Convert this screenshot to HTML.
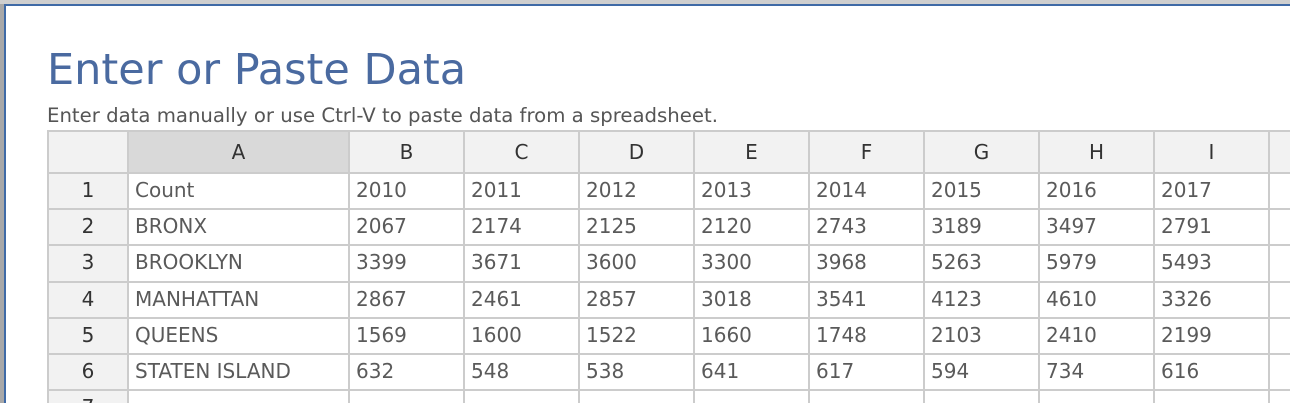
<!DOCTYPE html>
<html style="width:1290px;height:403px;overflow:hidden"><head><meta charset="utf-8"><style>
*{margin:0;padding:0;box-sizing:border-box}
body{width:1290px;height:403px;overflow:hidden;background:#a8a8a8;position:relative;font-family:"DejaVu Sans","Liberation Sans",sans-serif}
.top{position:absolute;left:0;top:0;width:1290px;height:4px;background:#cfcfcf}
.dlg{position:absolute;left:4px;top:4px;width:1286px;height:399px;background:#fff;border-left:2px solid #3f6aa6;border-top:2px solid #3f6aa6}
h1{position:absolute;left:47px;top:44px;font-weight:normal;font-size:43px;color:#4a6aa0;white-space:nowrap;line-height:52px}
.sub{position:absolute;left:47px;top:104px;font-size:19.7px;color:#555;white-space:nowrap}
.c{position:absolute;border-right:2px solid #ccc;border-bottom:2px solid #ccc;font-size:20px;color:#5a5a5a;line-height:33px;white-space:nowrap;overflow:hidden}
.h{background:#f2f2f2;text-align:center;color:#333}
.l{padding-left:6px}
</style></head><body>
<div class="top"></div>
<div class="dlg"></div>
<h1>Enter or Paste Data</h1>
<div class="sub">Enter data manually or use Ctrl-V to paste data from a spreadsheet.</div>
<div style="position:absolute;left:47px;top:130px;width:1243px;height:2px;background:#ccc"></div>
<div style="position:absolute;left:47px;top:130px;width:2px;height:273px;background:#ccc"></div>
<div id="g"></div>
<script>
var xs=[49,129,350,465,580,695,810,925,1040,1155,1270,1290];
var ys=[132,174,210,246,283,319,355,391,403];
var hd=["","A","B","C","D","E","F","G","H","I",""];
var data=[["Count","2010","2011","2012","2013","2014","2015","2016","2017"],
["BRONX","2067","2174","2125","2120","2743","3189","3497","2791"],
["BROOKLYN","3399","3671","3600","3300","3968","5263","5979","5493"],
["MANHATTAN","2867","2461","2857","3018","3541","4123","4610","3326"],
["QUEENS","1569","1600","1522","1660","1748","2103","2410","2199"],
["STATEN ISLAND","632","548","538","641","617","594","734","616"],
["","","","","","","","",""]];
var h="";
for(var r=0;r<8;r++){for(var c=0;c<11;c++){
var x=xs[c],y=ys[r],w=xs[c+1]-x,hh=ys[r+1]-y;
var cls="c",t="",st="";
if(r==0){cls+=" h";t=hd[c];if(c==1)st="background:#d9d9d9;";st+="line-height:40px;";}
else if(c==0){cls+=" h";t=r<7?r:"7";}
else{cls+=" l";t=(c<=9?data[r-1][c-1]:"")||"";}
if(r==7)st+="border-bottom:none;";
if(c==10)st+="border-right:none;";
h+='<div class="'+cls+'" style="left:'+x+'px;top:'+y+'px;width:'+w+'px;height:'+hh+'px;'+st+'">'+t+'</div>';}}
document.getElementById("g").innerHTML=h;
</script>
</body></html>
